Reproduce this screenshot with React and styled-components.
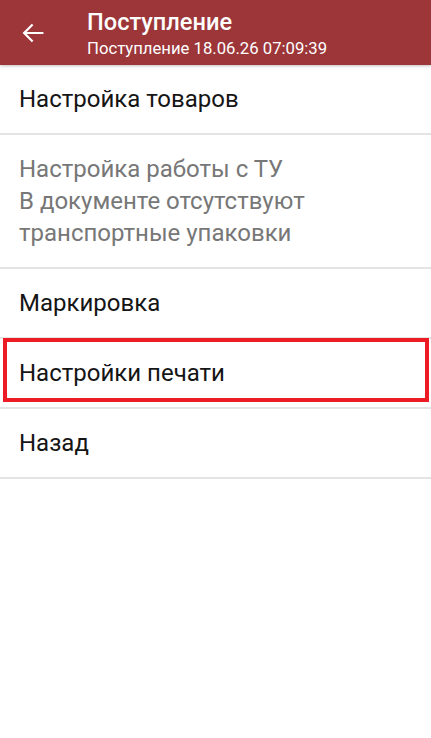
import React from "react";
import styled, { createGlobalStyle } from "styled-components";

const GlobalStyle = createGlobalStyle`
  html, body {
    margin: 0;
    padding: 0;
    background: #ffffff;
  }
  body {
    font-family: Roboto, "Noto Sans", "Liberation Sans", sans-serif;
    -webkit-font-smoothing: antialiased;
  }
`;

const Screen = styled.div`
  width: 431px;
  min-height: 738px;
  background: #ffffff;
  display: flex;
  flex-direction: column;
`;

const Toolbar = styled.header`
  height: 65px;
  background: #9c3639;
  display: flex;
  align-items: center;
  box-shadow: 0 1px 3px rgba(0, 0, 0, 0.25);
  position: relative;
  z-index: 1;
`;

const BackButton = styled.button`
  width: 65px;
  height: 65px;
  border: none;
  background: transparent;
  padding: 0;
  display: flex;
  align-items: center;
  justify-content: center;
  color: #ffffff;
  margin-right: 22px;
`;

const Titles = styled.div`
  align-self: flex-start;
  padding-top: 9px;
  display: flex;
  flex-direction: column;
  color: #ffffff;
`;

const Title = styled.div`
  font-size: 23.6px;
  font-weight: 500;
  line-height: 26px;
`;

const Subtitle = styled.div`
  font-size: 16.7px;
  line-height: 20px;
  margin-top: 4px;
`;

const Menu = styled.ul`
  list-style: none;
  margin: 0;
  padding: 0;
`;

const Item = styled.li`
  position: relative;
  padding: 18px 19px;
  font-size: 24px;
  line-height: 32px;
  color: ${props => (props.disabled ? "#777777" : "#151515")};
  border-bottom: 2px solid #e4e4e4;
`;

const Highlight = styled.span`
  position: absolute;
  top: -1px;
  bottom: 5px;
  left: 3px;
  right: 2px;
  border: 4px solid #ed1c24;
  pointer-events: none;
`;

const ArrowBack = () => (
  <svg width="28" height="28" viewBox="0 0 24 24" fill="none">
    <path
      d="M20 12H4.6M11 5.4L4.4 12l6.6 6.6"
      stroke="currentColor"
      strokeWidth="1.9"
      strokeLinecap="square"
    />
  </svg>
);

const items = [
  { text: ["Настройка товаров"] },
  {
    text: [
      "Настройка работы с ТУ",
      "В документе отсутствуют",
      "транспортные упаковки",
    ],
    disabled: true,
  },
  { text: ["Маркировка"] },
  { text: ["Настройки печати"], marked: true },
  { text: ["Назад"] },
];

export default function App() {
  return (
    <Screen>
      <GlobalStyle />
      <Toolbar>
        <BackButton>
          <ArrowBack />
        </BackButton>
        <Titles>
          <Title>Поступление</Title>
          <Subtitle>Поступление 18.06.26 07:09:39</Subtitle>
        </Titles>
      </Toolbar>
      <Menu>
        {items.map((item, i) => (
          <Item key={i} disabled={item.disabled}>
            {item.text.map((line, j) => (
              <div key={j}>{line}</div>
            ))}
            {item.marked && <Highlight />}
          </Item>
        ))}
      </Menu>
    </Screen>
  );
}
